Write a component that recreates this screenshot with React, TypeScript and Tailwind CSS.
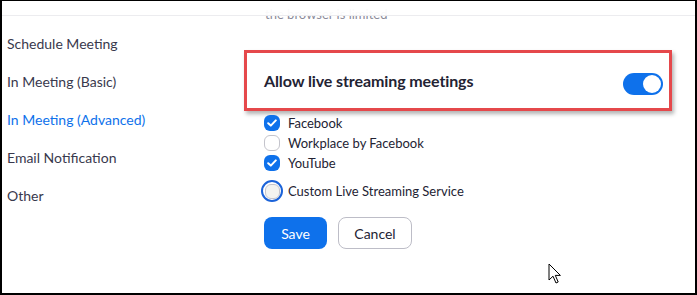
import React from "react";

const Check = () => (
  <svg width="10" height="8" viewBox="0 0 10 8" fill="none">
    <path d="M1.2 4.2 L3.8 6.6 L8.8 1.4" stroke="white" strokeWidth="2" strokeLinecap="round" strokeLinejoin="round" />
  </svg>
);

function Box({ checked, focus, label }: { checked?: boolean; focus?: boolean; label: string }) {
  return (
    <div className={`flex items-center ${focus ? "h-[22px] mt-[7px]" : "h-[20px]"}`}>
      <div className={`flex h-[22px] w-[22px] items-center justify-center rounded-full ${focus ? "border-2 border-[#1b63d9]" : ""} -ml-[3px] mr-[5px]`}>
        {checked ? (
          <div className="flex h-[16px] w-[16px] items-center justify-center rounded-[6px] bg-[#0e71eb]">
            <Check />
          </div>
        ) : (
          <div className={`${focus ? "h-[15px] w-[15px]" : "h-[16px] w-[16px]"} rounded-[6px] border border-[#c4c4cc] ${focus ? "bg-[#f3f3f0]" : "bg-white"}`} />
        )}
      </div>
      <span className="text-[13px] leading-[18px] text-[#232333]">{label}</span>
    </div>
  );
}

export default function App() {
  const items = ["Schedule Meeting", "In Meeting (Basic)", "In Meeting (Advanced)", "Email Notification", "Other"];
  return (
    <div
      className="relative h-[295px] w-[697px] overflow-hidden border-t border-l-2 border-r-2 border-b-2 border-black bg-white"
      style={{ fontFamily: "Lato, 'Open Sans', sans-serif" }}
    >
      <div className="absolute left-0 right-0 top-0 h-[15px] border-b border-[#ececef] bg-white/95 z-10" />
      <div className="flex h-full">
        <div className="w-[242px] shrink-0 pt-[23px] pl-[5px]">
          {items.map((t) => (
            <div
              key={t}
              className={`flex h-[38px] items-center text-[14px] ${t === "In Meeting (Advanced)" ? "text-[#0e71eb]" : "text-[#39394d]"}`}
            >
              {t}
            </div>
          ))}
        </div>
        <div className="flex-1">
          <div className="pl-[21px] pt-[4px] text-[13px] leading-[18px] text-[#8a8a99]">the browser is limited</div>
          <div className="mt-[27px] flex h-[61px] w-[428px] items-center justify-between border-[3px] border-[#e5484b] bg-white pl-[17px] pr-[6px] shadow-[2px_3px_4px_rgba(0,0,0,0.3)]">
            <span className="text-[16px] font-bold tracking-[-0.1px] text-[#232333]">Allow live streaming meetings</span>
            <div className="mt-[6px] flex h-[22px] w-[40px] items-center justify-end rounded-full bg-[#0e71eb] pr-[2px]">
              <div className="h-[18px] w-[18px] rounded-full bg-white" />
            </div>
          </div>
          <div className="pl-[20px] pt-[2px]">
            <Box checked label="Facebook" />
            <Box label="Workplace by Facebook" />
            <Box checked label="YouTube" />
            <Box focus label="Custom Live Streaming Service" />
            <div className="mt-[15px] flex gap-[11px]">
              <button className="h-[32px] w-[63px] rounded-[8px] bg-[#0e71eb] text-[14px] text-white">Save</button>
              <button className="h-[32px] w-[74px] rounded-[8px] border border-[#bdbdc7] bg-white text-[14px] text-[#232333]">Cancel</button>
            </div>
          </div>
        </div>
      </div>
      <svg className="absolute left-[546px] top-[262px] z-20" width="14" height="22" viewBox="0 0 14 22">
        <path d="M1 1 L1 17 L5 13.2 L8 20 L10.2 19 L7.3 12.4 L12.4 12.4 Z" fill="white" stroke="black" strokeWidth="1" strokeLinejoin="round" />
      </svg>
    </div>
  );
}
